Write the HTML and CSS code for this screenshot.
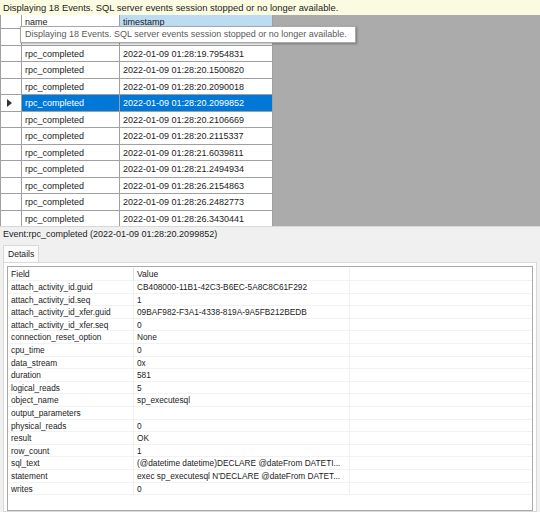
FILE: index.html
```html
<!DOCTYPE html>
<html lang="en">
<head>
  <meta charset="UTF-8" />
  <title>Watch Live Data</title>
  <link rel="stylesheet" href="styles.css">
</head>
<body>

  <div class="infobar">Displaying 18 Events. SQL server events session stopped or no longer available.</div>

  <div class="grid-area">
    <div class="grid">
      <div class="row head">
        <div class="cell rh"></div>
        <div class="cell name">name</div>
        <div class="cell ts sorted">timestamp</div>
      </div>
      <div class="row"><div class="cell rh"></div><div class="cell name">rpc_completed</div><div class="cell ts">2022-01-09 01:28:19.2909827</div></div>
      <div class="row"><div class="cell rh"></div><div class="cell name">rpc_completed</div><div class="cell ts">2022-01-09 01:28:19.7954831</div></div>
      <div class="row"><div class="cell rh"></div><div class="cell name">rpc_completed</div><div class="cell ts">2022-01-09 01:28:20.1500820</div></div>
      <div class="row"><div class="cell rh"></div><div class="cell name">rpc_completed</div><div class="cell ts">2022-01-09 01:28:20.2090018</div></div>
      <div class="row selected"><div class="cell rh"><span class="arrow"></span></div><div class="cell name">rpc_completed</div><div class="cell ts">2022-01-09 01:28:20.2099852</div></div>
      <div class="row"><div class="cell rh"></div><div class="cell name">rpc_completed</div><div class="cell ts">2022-01-09 01:28:20.2106669</div></div>
      <div class="row"><div class="cell rh"></div><div class="cell name">rpc_completed</div><div class="cell ts">2022-01-09 01:28:20.2115337</div></div>
      <div class="row"><div class="cell rh"></div><div class="cell name">rpc_completed</div><div class="cell ts">2022-01-09 01:28:21.6039811</div></div>
      <div class="row"><div class="cell rh"></div><div class="cell name">rpc_completed</div><div class="cell ts">2022-01-09 01:28:21.2494934</div></div>
      <div class="row"><div class="cell rh"></div><div class="cell name">rpc_completed</div><div class="cell ts">2022-01-09 01:28:26.2154863</div></div>
      <div class="row"><div class="cell rh"></div><div class="cell name">rpc_completed</div><div class="cell ts">2022-01-09 01:28:26.2482773</div></div>
      <div class="row"><div class="cell rh"></div><div class="cell name">rpc_completed</div><div class="cell ts">2022-01-09 01:28:26.3430441</div></div>
    </div>
    <div class="tooltip">Displaying 18 Events. SQL server events session stopped or no longer available.</div>
  </div>

  <div class="details">
    <div class="event-title">Event:rpc_completed (2022-01-09 01:28:20.2099852)</div>
    <div class="tabs"><span class="tab">Details</span></div>
    <div class="tab-page">
      <div class="fields">
        <div class="frow fhead"><div class="fcell field">Field</div><div class="fcell value">Value</div><div class="fcell rest"></div></div>
        <div class="frow"><div class="fcell field">attach_activity_id.guid</div><div class="fcell value">CB408000-11B1-42C3-B6EC-5A8C8C61F292</div><div class="fcell rest"></div></div>
        <div class="frow"><div class="fcell field">attach_activity_id.seq</div><div class="fcell value">1</div><div class="fcell rest"></div></div>
        <div class="frow"><div class="fcell field">attach_activity_id_xfer.guid</div><div class="fcell value">09BAF982-F3A1-4338-819A-9A5FB212BEDB</div><div class="fcell rest"></div></div>
        <div class="frow"><div class="fcell field">attach_activity_id_xfer.seq</div><div class="fcell value">0</div><div class="fcell rest"></div></div>
        <div class="frow"><div class="fcell field">connection_reset_option</div><div class="fcell value">None</div><div class="fcell rest"></div></div>
        <div class="frow"><div class="fcell field">cpu_time</div><div class="fcell value">0</div><div class="fcell rest"></div></div>
        <div class="frow"><div class="fcell field">data_stream</div><div class="fcell value">0x</div><div class="fcell rest"></div></div>
        <div class="frow"><div class="fcell field">duration</div><div class="fcell value">581</div><div class="fcell rest"></div></div>
        <div class="frow"><div class="fcell field">logical_reads</div><div class="fcell value">5</div><div class="fcell rest"></div></div>
        <div class="frow"><div class="fcell field">object_name</div><div class="fcell value">sp_executesql</div><div class="fcell rest"></div></div>
        <div class="frow"><div class="fcell field">output_parameters</div><div class="fcell value"></div><div class="fcell rest"></div></div>
        <div class="frow"><div class="fcell field">physical_reads</div><div class="fcell value">0</div><div class="fcell rest"></div></div>
        <div class="frow"><div class="fcell field">result</div><div class="fcell value">OK</div><div class="fcell rest"></div></div>
        <div class="frow"><div class="fcell field">row_count</div><div class="fcell value">1</div><div class="fcell rest"></div></div>
        <div class="frow"><div class="fcell field">sql_text</div><div class="fcell value">(@datetime datetime)DECLARE @dateFrom DATETI...</div><div class="fcell rest"></div></div>
        <div class="frow"><div class="fcell field">statement</div><div class="fcell value">exec sp_executesql N'DECLARE @dateFrom DATET...</div><div class="fcell rest"></div></div>
        <div class="frow"><div class="fcell field">writes</div><div class="fcell value">0</div><div class="fcell rest"></div></div>
      </div>
    </div>
  </div>

</body>
</html>
```

FILE: styles.css
```css
* {
  box-sizing: border-box;
}

body {
  margin: 0;
  width: 540px;
  height: 512px;
  overflow: hidden;
  font-family: 'Liberation Sans', Arial, sans-serif;
  color: #1b1b1b;
  background: #f0f0f0;
}

.infobar {
  height: 15px;
  padding: 1px 0 0 3px;
  font-size: 9.4px;
  line-height: 13px;
  background: #fbfbe2;
  white-space: nowrap;
}

/* event grid */

.grid-area {
  position: relative;
  height: 211px;
  overflow: hidden;
  background: #ababab;
}

.grid {
  width: 273px;
  background: #fff;
  border-left: 1px solid #a0a0a0;
}

.row {
  display: flex;
  height: 16.5px;
  font-size: 9px;
  line-height: 16px;
}

.row.head {
  height: 14px;
  line-height: 15px;
}

.cell {
  border-right: 1px solid #a0a0a0;
  border-bottom: 1px solid #a0a0a0;
  padding-left: 3px;
  white-space: nowrap;
  overflow: hidden;
}

.cell.rh {
  width: 21px;
  position: relative;
}

.cell.name {
  width: 98px;
}

.cell.ts {
  width: 153px;
}

.cell.sorted {
  background: #bcdcf4;
}

.row.selected .cell.name,
.row.selected .cell.ts {
  background: #0078d7;
  color: #fff;
}

.arrow {
  position: absolute;
  left: 6px;
  top: 4px;
  border-left: 5px solid #333;
  border-top: 4px solid transparent;
  border-bottom: 4px solid transparent;
}

.tooltip {
  position: absolute;
  left: 20px;
  top: 11px;
  width: 336px;
  height: 17px;
  padding-left: 4px;
  background: #fff;
  border: 1px solid #a9a9a9;
  box-shadow: 1px 1px 2px rgba(0, 0, 0, 0.3);
  color: #5a5a5a;
  font-size: 9px;
  line-height: 15px;
  white-space: nowrap;
}

/* details pane */

.details {
  border-top: 1px solid #d8d8d8;
  padding: 0 3px;
}

.event-title {
  height: 18px;
  padding: 1px 0 0 0;
  font-size: 9px;
  line-height: 13px;
}

.tabs {
  display: flex;
  height: 17px;
}

.tab {
  padding: 2px 4px 0 4px;
  font-size: 8.6px;
  line-height: 13px;
  background: #fbfbfb;
  border: 1px solid #d9d9d9;
  border-bottom: none;
}

.tab-page {
  height: 250px;
  border: 1px solid #d9d9d9;
  background: #fff;
  padding: 3px;
}

.fields {
  height: 245px;
  border: 1px solid #a9a9a9;
  padding-top: 1px;
}

.frow {
  display: flex;
  height: 12.6px;
  font-size: 8.3px;
  line-height: 12px;
  border-bottom: 1px solid #f2f2f2;
}

.frow.fhead {
  height: 13px;
  line-height: 12px;
  font-size: 8.6px;
}

.fcell {
  padding-left: 3px;
  white-space: nowrap;
  overflow: hidden;
}

.fcell.field {
  width: 125px;
}

.fcell.value {
  width: 216px;
  border-left: 1px solid #f0f0f0;
}

.fhead .fcell.value {
  border-left-color: #e0e0e0;
}

.fcell.rest {
  flex: 1;
  border-left: 1px solid #f0f0f0;
}
```
